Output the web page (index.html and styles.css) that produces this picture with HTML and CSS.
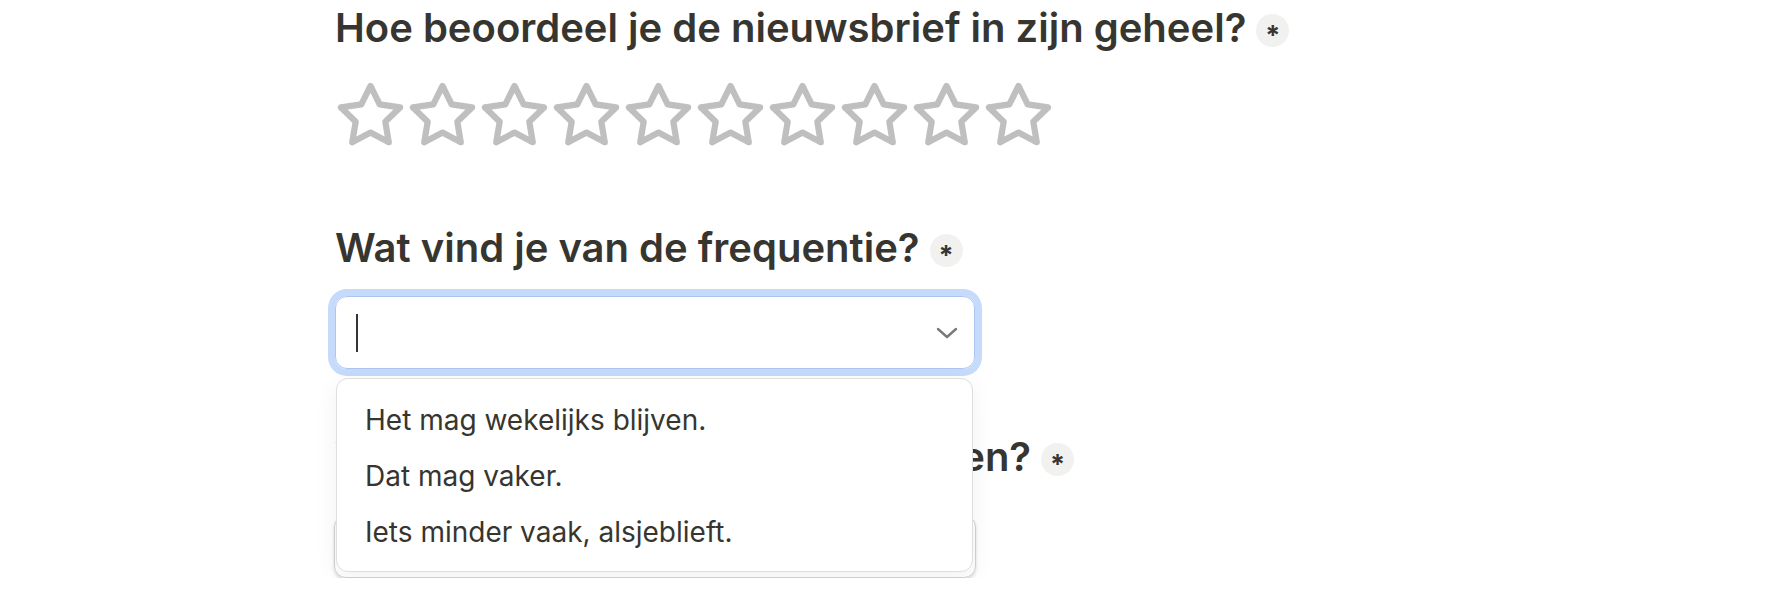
FILE: index.html
```html
<!DOCTYPE html>
<html lang="nl">
<head>
    <meta charset="UTF-8">
    <meta name="viewport" content="width=device-width, initial-scale=1.0">
    <title>Nieuwsbrief feedback</title>
    <link rel="stylesheet" href="styles.css">
</head>
<body>

    <main class="form">
        <!-- vraag 1: beoordeling -->
        <section class="question">
            <h2 class="question-title">
                <span>Hoe beoordeel je de nieuwsbrief in zijn geheel?</span>
                <span class="required">*</span>
            </h2>
            <div class="rating">
                <svg class="star" viewBox="0 0 24 24"><polygon points="12 2 15.09 8.26 22 9.27 17 14.14 18.18 21.02 12 17.77 5.82 21.02 7 14.14 2 9.27 8.91 8.26 12 2"/></svg>
                <svg class="star" viewBox="0 0 24 24"><polygon points="12 2 15.09 8.26 22 9.27 17 14.14 18.18 21.02 12 17.77 5.82 21.02 7 14.14 2 9.27 8.91 8.26 12 2"/></svg>
                <svg class="star" viewBox="0 0 24 24"><polygon points="12 2 15.09 8.26 22 9.27 17 14.14 18.18 21.02 12 17.77 5.82 21.02 7 14.14 2 9.27 8.91 8.26 12 2"/></svg>
                <svg class="star" viewBox="0 0 24 24"><polygon points="12 2 15.09 8.26 22 9.27 17 14.14 18.18 21.02 12 17.77 5.82 21.02 7 14.14 2 9.27 8.91 8.26 12 2"/></svg>
                <svg class="star" viewBox="0 0 24 24"><polygon points="12 2 15.09 8.26 22 9.27 17 14.14 18.18 21.02 12 17.77 5.82 21.02 7 14.14 2 9.27 8.91 8.26 12 2"/></svg>
                <svg class="star" viewBox="0 0 24 24"><polygon points="12 2 15.09 8.26 22 9.27 17 14.14 18.18 21.02 12 17.77 5.82 21.02 7 14.14 2 9.27 8.91 8.26 12 2"/></svg>
                <svg class="star" viewBox="0 0 24 24"><polygon points="12 2 15.09 8.26 22 9.27 17 14.14 18.18 21.02 12 17.77 5.82 21.02 7 14.14 2 9.27 8.91 8.26 12 2"/></svg>
                <svg class="star" viewBox="0 0 24 24"><polygon points="12 2 15.09 8.26 22 9.27 17 14.14 18.18 21.02 12 17.77 5.82 21.02 7 14.14 2 9.27 8.91 8.26 12 2"/></svg>
                <svg class="star" viewBox="0 0 24 24"><polygon points="12 2 15.09 8.26 22 9.27 17 14.14 18.18 21.02 12 17.77 5.82 21.02 7 14.14 2 9.27 8.91 8.26 12 2"/></svg>
                <svg class="star" viewBox="0 0 24 24"><polygon points="12 2 15.09 8.26 22 9.27 17 14.14 18.18 21.02 12 17.77 5.82 21.02 7 14.14 2 9.27 8.91 8.26 12 2"/></svg>
            </div>
        </section>

        <!-- vraag 2: keuzelijst (open) -->
        <section class="question question-select">
            <h2 class="question-title">
                <span>Wat vind je van de frequentie?</span>
                <span class="required">*</span>
            </h2>
            <div class="combo">
                <div class="combo-input">
                    <span class="caret"></span>
                    <svg class="chevron" viewBox="0 0 22 12"><polyline points="2 2 11 10 20 2"/></svg>
                </div>
                <ul class="combo-menu">
                    <li class="combo-option">Het mag wekelijks blijven.</li>
                    <li class="combo-option">Dat mag vaker.</li>
                    <li class="combo-option">Iets minder vaak, alsjeblieft.</li>
                </ul>
            </div>
        </section>

        <!-- vraag 3 (grotendeels achter de lijst) -->
        <section class="question question-text">
            <h2 class="question-title">
                <span>Welke rubrieken zou je graag lezen?</span>
                <span class="required">*</span>
            </h2>
            <div class="text-input"></div>
        </section>
    </main>

</body>
</html>
```

FILE: styles.css
```css
/* basis */
body {
    margin: 0;
    background-color: #ffffff;
    color: #37352f;
    font-family: Inter, "Noto Sans", sans-serif;
}

.form {
    width: 640px;
    margin-left: 335px;
    padding-top: 4px;
}

/* vraagtitel */
.question-title {
    display: flex;
    align-items: center;
    gap: 10px;
    margin: 0;
    font-size: 40px;
    line-height: 48px;
    font-weight: 600;
    white-space: nowrap;
}

.required {
    display: flex;
    justify-content: center;
    align-items: center;
    flex-shrink: 0;
    width: 33px;
    height: 33px;
    margin-top: 4px;
    padding-top: 10px;
    box-sizing: border-box;
    border-radius: 50%;
    background-color: #f1f1f0;
    font-size: 27px;
    line-height: 1;
    font-weight: 700;
}

/* sterren */
.rating {
    display: flex;
    gap: 1px;
    margin-top: 28px;
}

.star {
    flex-shrink: 0;
    width: 71px;
    height: 71px;
    fill: none;
    stroke: #bfbfbf;
    stroke-width: 2.1;
    stroke-linejoin: round;
    stroke-linecap: round;
}

/* keuzelijst */
.question-select {
    margin-top: 73px;
}

.combo {
    position: relative;
    margin-top: 24px;
}

.combo-input {
    display: flex;
    align-items: center;
    justify-content: space-between;
    height: 73px;
    padding: 0 16px 0 20px;
    box-sizing: border-box;
    border: 1px solid #adc6f1;
    border-radius: 12px;
    box-shadow: 0 0 0 7px #c6dafc;
}

.caret {
    width: 2px;
    height: 38px;
    background-color: #37352f;
}

.chevron {
    width: 22px;
    height: 12px;
    fill: none;
    stroke: #7a7a7a;
    stroke-width: 2.4;
    stroke-linecap: round;
    stroke-linejoin: round;
}

.combo-menu {
    position: absolute;
    top: 82px;
    left: 1px;
    z-index: 2;
    width: 637px;
    height: 194px;
    margin: 0;
    padding: 13px 0 11px;
    box-sizing: border-box;
    list-style: none;
    background-color: #ffffff;
    border: 1px solid #dedede;
    border-radius: 12px;
    box-shadow: 0 6px 24px rgba(0, 0, 0, 0.06);
}

.combo-option {
    padding-left: 28px;
    font-size: 28px;
    line-height: 56px;
    color: #37352f;
}

/* tekstveld */
.question-text {
    margin-top: 64px;
}

.text-input {
    width: 642px;
    height: 63px;
    margin-top: 34px;
    margin-left: -1px;
    box-sizing: border-box;
    border: 1px solid #d2d2d2;
    border-radius: 12px;
    box-shadow: 0 2px 3px rgba(0, 0, 0, 0.15);
}
```
